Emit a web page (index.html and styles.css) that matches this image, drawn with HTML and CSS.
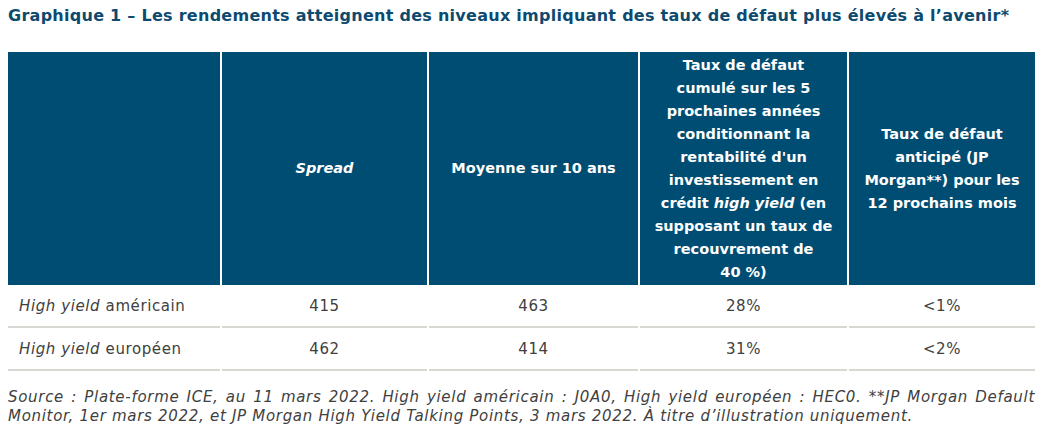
FILE: index.html
```html
<!DOCTYPE html>
<html lang="fr">
<head>
<meta charset="utf-8">
<title>Graphique 1</title>
<link rel="stylesheet" href="styles.css">
</head>
<body>
<h1 class="title">Graphique 1 – Les rendements atteignent des niveaux impliquant des taux de défaut plus élevés à l’avenir*</h1>
<table class="data">
  <thead>
    <tr>
      <th class="c1"></th>
      <th class="c2"><em>Spread</em></th>
      <th class="c3">Moyenne sur 10 ans</th>
      <th class="c4">Taux de défaut<br>cumulé sur les 5<br>prochaines années<br>conditionnant la<br>rentabilité d'un<br>investissement en<br>crédit <em>high yield</em> (en<br>supposant un taux de<br>recouvrement de<br>40&nbsp;%)</th>
      <th class="c5">Taux de défaut<br>anticipé (JP<br>Morgan**) pour les<br>12 prochains mois</th>
    </tr>
  </thead>
  <tbody>
    <tr>
      <td class="label"><em>High yield</em> américain</td>
      <td>415</td>
      <td>463</td>
      <td>28%</td>
      <td>&lt;1%</td>
    </tr>
    <tr>
      <td class="label"><em>High yield</em> européen</td>
      <td>462</td>
      <td>414</td>
      <td>31%</td>
      <td>&lt;2%</td>
    </tr>
  </tbody>
</table>
<p class="note"><span class="line1">Source : Plate-forme ICE, au 11 mars 2022. High yield américain : J0A0, High yield européen : HEC0. **JP Morgan Default</span><span class="line2">Monitor, 1er mars 2022, et JP Morgan High Yield Talking Points, 3 mars 2022. À titre d’illustration uniquement.</span></p>
</body>
</html>
```
FILE: styles.css
```css
html, body {
  margin: 0;
  padding: 0;
  background: #ffffff;
}
body {
  padding: 0 0 0 8px;
  font-family: "DejaVu Sans", "Liberation Sans", sans-serif;
  color: #404040;
}
.title {
  margin: 5px 0 0 0;
  font-size: 16px;
  line-height: 22px;
  letter-spacing: 0.27px;
  font-weight: bold;
  color: #0d4a70;
  white-space: nowrap;
}
.data {
  margin: 25px 0 0 -2px;
  border-collapse: separate;
  border-spacing: 2px 0;
  font-size: 15px;
}
.data th {
  background: #004d73;
  color: #ffffff;
  font-weight: bold;
  font-size: 14.5px;
  letter-spacing: 0;
  line-height: 23px;
  height: 233px;
  padding: 0 2px;
  box-sizing: border-box;
  text-align: center;
  vertical-align: middle;
  white-space: nowrap;
}
.c1 { width: 212px; }
.c2 { width: 205px; }
.c3 { width: 209px; }
.c4 { width: 207px; }
.c5 { width: 186px; }
.data td {
  height: 41px;
  padding: 0 8px;
  border-bottom: 2px solid #d9d7d2;
  text-align: center;
  vertical-align: middle;
  color: #404040;
  letter-spacing: 0.6px;
}
.data td.label {
  text-align: left;
  padding-left: 11px;
}
.note {
  margin: 17px 0 0 0;
  width: 1027px;
  font-size: 15px;
  line-height: 19px;
  letter-spacing: 0.7px;
  font-style: italic;
  color: #404040;
}
.line1 {
  display: block;
  text-align: justify;
  text-align-last: justify;
  white-space: nowrap;
}
.line2 {
  display: block;
  white-space: nowrap;
}
```
